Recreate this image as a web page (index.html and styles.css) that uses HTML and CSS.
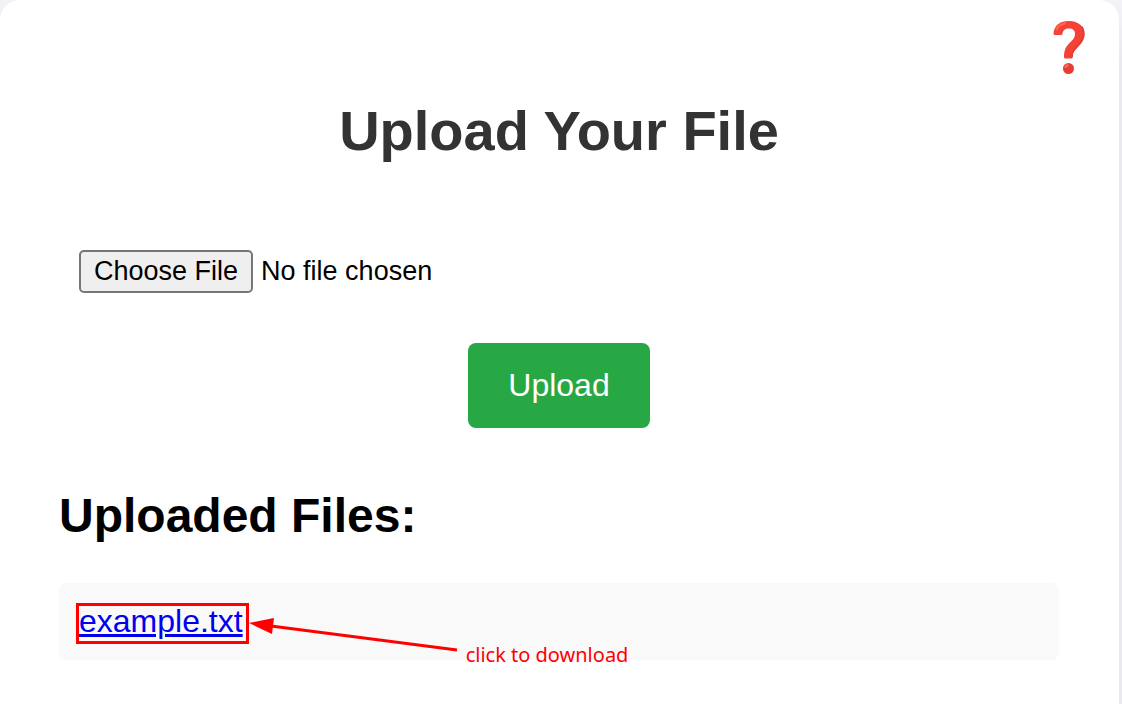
FILE: index.html
```html
<!DOCTYPE html>
<html lang="en">
<head>
<meta charset="utf-8">
<title>Upload Your File</title>
<link rel="stylesheet" href="styles.css">
</head>
<body>
<main class="card">
  <button class="help" type="button" aria-label="Help">
    <svg class="help-icon" viewBox="0 0 34 55" aria-hidden="true">
      <path fill="#f44336" d="M3 15Q1.500 15 1.500 13.500C2 5.500 8 1 17 1C26.500 1 32.500 6.500 32.500 14.500C32.500 20.500 29 24 25 28C21.500 31.500 20.500 33 20.500 37Q20.500 38.500 19 38.500H13.500Q12 38.500 12 37C12 30.500 13.500 27 18 22.500C21.500 19 23 17.500 23 14C23 10.500 21 8.500 17 8.500C13 8.500 11 10.500 10.500 13.500Q10.500 15 9 15Z"/>
      <path fill="none" stroke="#fb6a52" stroke-width="2" stroke-linecap="round" d="M4.500 9.500Q7 4.500 13 3.500"/>
      <path fill="none" stroke="#df3b33" stroke-width="1.500" stroke-linecap="round" d="M30 7Q33 12 31 18Q28 24 23 29Q20 32 20 37"/>
      <circle cx="16.500" cy="48.500" r="5.500" fill="#e93c33"/>
      <ellipse cx="14.500" cy="46" rx="2.500" ry="1.500" fill="#fb6a52" transform="rotate(-35 14.500 46)"/>
    </svg>
  </button>
  <h1 class="title">Upload Your File</h1>
  <form class="upload-form">
    <input class="file-input" type="file" aria-label="File to upload">
    <button class="upload-button" type="button">Upload</button>
  </form>
  <h2 class="files-title">Uploaded Files:</h2>
  <ul class="files">
    <li class="file">
      <span class="file-target"><a href="#example.txt">example.txt</a>
        <span class="hint">
          <svg class="arrow" viewBox="0 0 210 38" aria-hidden="true">
            <path d="M22 8L208 32" stroke="#f00" stroke-width="3"/>
            <path d="M0 5L25 0L23 16Z" fill="#f00"/>
          </svg>
          <span class="hint-text">click to download</span>
        </span>
      </span>
    </li>
  </ul>
</main>
</body>
</html>
```

FILE: styles.css
```css
* { box-sizing: border-box; }

body {
  margin: 0;
  min-height: 100vh;
  display: flex;
  padding-right: 3px;
  background: linear-gradient(#f2f2f7, #e9e9ee 60px);
  font-family: "Liberation Sans", Arial, sans-serif;
}

.card {
  position: relative;
  flex: 1;
  padding: 99px 60px 44px 59px;
  border-radius: 20px 20px 0 0;
  background: #fff;
}

.help {
  position: absolute;
  top: 20px;
  right: 33px;
  padding: 0;
  border: 0;
  background: none;
}

.help-icon { display: block; width: 34px; height: 55px; }

.title {
  margin: 0 0 67px;
  color: #333;
  font-size: 56px;
  line-height: 64px;
  text-align: center;
}

.upload-form {
  display: flex;
  flex-direction: column;
  align-items: center;
  gap: 30px;
}

.file-input {
  width: 100%;
  padding: 20px;
  font: 27px/31px "Liberation Sans", Arial, sans-serif;
}

.file-input::file-selector-button {
  margin: 0 8px 0 0;
  padding: 4px 13px;
  border: 2px solid #767676;
  border-radius: 5px;
  background: #efefef;
  color: #000;
  font: inherit;
}

.upload-button {
  padding: 24px 40px;
  border: 0;
  border-radius: 8px;
  background: #28a745;
  color: #fff;
  font: 32px/37px "Liberation Sans", Arial, sans-serif;
}

.files-title {
  margin: 60px 0 40px;
  font-size: 48px;
  line-height: 55px;
}

.files { margin: 0; padding: 0; list-style: none; }

.file {
  padding: 20px;
  border-radius: 8px;
  background: #f9f9f9;
  font-size: 32px;
  line-height: 37px;
}

.file-target {
  position: relative;
  display: inline-block;
  vertical-align: top;
}

.file-target a { color: #00e; text-decoration-thickness: 3px; }

/* Highlight frame around the link */
.file-target::before {
  content: "";
  position: absolute;
  inset: 0 -6px -4px -3px;
  border: 3px solid #f00;
  pointer-events: none;
}

.hint {
  position: absolute;
  top: 15px;
  left: 100%;
  display: flex;
  gap: 7px;
  padding-left: 6px;
  color: #f00;
  pointer-events: none;
}

.arrow { flex: none; width: 210px; height: 38px; }

.hint-text {
  padding-top: 23px;
  font: 20px/28px "Noto Sans", sans-serif;
  white-space: nowrap;
}
```
